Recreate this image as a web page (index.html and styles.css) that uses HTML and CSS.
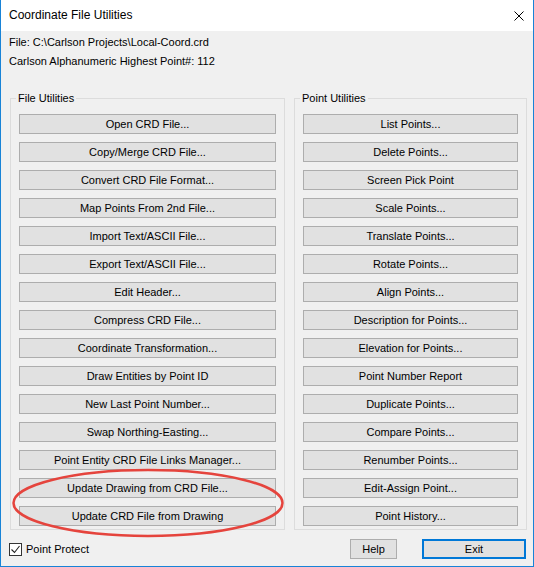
FILE: index.html
```html
<!DOCTYPE html>
<html lang="en">
<head>
  <meta charset="UTF-8" />
  <title>Coordinate File Utilities</title>
  <link rel="stylesheet" href="styles.css">
</head>
<body>
  <div class="window">
    <div class="titlebar">
      <span class="title">Coordinate File Utilities</span>
      <svg class="close" width="10" height="10" viewBox="0 0 10 10">
        <path d="M0.5 0.5 L9.5 9.5 M9.5 0.5 L0.5 9.5" stroke="#000" stroke-width="1" fill="none"/>
      </svg>
    </div>

    <div class="info">
      <p>File: C:\Carlson Projects\Local-Coord.crd</p>
      <p>Carlson Alphanumeric Highest Point#: 112</p>
    </div>

    <div class="groups">
      <fieldset class="group group-file">
        <legend>File Utilities</legend>
        <button class="btn">Open CRD File...</button>
        <button class="btn">Copy/Merge CRD File...</button>
        <button class="btn">Convert CRD File Format...</button>
        <button class="btn">Map Points From 2nd File...</button>
        <button class="btn">Import Text/ASCII File...</button>
        <button class="btn">Export Text/ASCII File...</button>
        <button class="btn">Edit Header...</button>
        <button class="btn">Compress CRD File...</button>
        <button class="btn">Coordinate Transformation...</button>
        <button class="btn">Draw Entities by Point ID</button>
        <button class="btn">New Last Point Number...</button>
        <button class="btn">Swap Northing-Easting...</button>
        <button class="btn">Point Entity CRD File Links Manager...</button>
        <button class="btn">Update Drawing from CRD File...</button>
        <button class="btn">Update CRD File from Drawing</button>
      </fieldset>

      <fieldset class="group group-point">
        <legend>Point Utilities</legend>
        <button class="btn">List Points...</button>
        <button class="btn">Delete Points...</button>
        <button class="btn">Screen Pick Point</button>
        <button class="btn">Scale Points...</button>
        <button class="btn">Translate Points...</button>
        <button class="btn">Rotate Points...</button>
        <button class="btn">Align Points...</button>
        <button class="btn">Description for Points...</button>
        <button class="btn">Elevation for Points...</button>
        <button class="btn">Point Number Report</button>
        <button class="btn">Duplicate Points...</button>
        <button class="btn">Compare Points...</button>
        <button class="btn">Renumber Points...</button>
        <button class="btn">Edit-Assign Point...</button>
        <button class="btn">Point History...</button>
      </fieldset>
    </div>

    <div class="bottom">
      <label class="check">
        <span class="box">
          <svg width="11" height="11" viewBox="0 0 11 11">
            <path d="M1.5 5.5 L4.5 8.5 L9.5 2" stroke="#222" stroke-width="1.1" fill="none"/>
          </svg>
        </span>
        Point Protect
      </label>
      <button class="btn btn-help">Help</button>
      <button class="btn btn-exit">Exit</button>
    </div>

    <!-- highlight drawn over the last two buttons -->
    <svg class="highlight" width="274" height="72" viewBox="0 0 274 72">
      <ellipse cx="136" cy="36" rx="134.5" ry="33" fill="none" stroke="#e5443d" stroke-width="2.5"/>
    </svg>
  </div>
</body>
</html>
```

FILE: styles.css
```css
body {
  margin: 0;
  padding: 0;
  font-family: 'Liberation Sans', Arial, sans-serif;
  font-size: 11px;
  color: #000;
  background: #f0f0f0;
}

.window {
  position: relative;
  width: 534px;
  height: 567px;
  box-sizing: border-box;
  border: 1px solid #1883d7;
  border-top: none;
  background: #f0f0f0;
  display: flex;
  flex-direction: column;
}

.titlebar {
  height: 31px;
  flex: none;
  background: #fff;
  display: flex;
  align-items: center;
  justify-content: space-between;
  padding: 0 9px 0 8px;
}

.title {
  font-size: 12px;
  margin-top: -1px;
}

.close {
  display: block;
}

.info {
  padding: 2px 8px 0;
}

.info p {
  margin: 0;
  line-height: 19px;
}

.groups {
  display: flex;
  gap: 9px;
  padding: 0 6px 0 9px;
  margin-top: 20px;
}

.group {
  margin: 0;
  min-width: 0;
  border: 1px solid #dcdcdc;
  padding: 9px 8px 3px;
  display: flex;
  flex-direction: column;
  gap: 8px;
}

.group legend {
  padding: 0 2px;
  margin-left: -3px;
  line-height: 14px;
  font-size: 11px;
}

.group-file {
  width: 275px;
  box-sizing: border-box;
  flex: none;
}

.group-point {
  flex: 1;
}

.btn {
  display: block;
  height: 20px;
  box-sizing: border-box;
  padding: 0;
  margin: 0;
  background: #e1e1e1;
  border: 1px solid #adadad;
  border-radius: 0;
  font-family: 'Liberation Sans', Arial, sans-serif;
  font-size: 11px;
  color: #000;
  width: 100%;
}

.bottom {
  display: flex;
  align-items: center;
  height: 20px;
  margin-top: 9px;
  padding: 0 7px 0 8px;
}

.check {
  display: flex;
  align-items: center;
  gap: 4px;
}

.box {
  width: 13px;
  height: 13px;
  box-sizing: border-box;
  border: 1px solid #333;
  background: #fff;
  display: flex;
  align-items: center;
  justify-content: center;
}

.box svg {
  display: block;
}

.btn-help {
  width: 47px;
  margin-left: auto;
}

.btn-exit {
  width: 104px;
  margin-left: 25px;
  border: 2px solid #0078d7;
}

.highlight {
  position: absolute;
  left: 11px;
  top: 467px;
  pointer-events: none;
}
```
